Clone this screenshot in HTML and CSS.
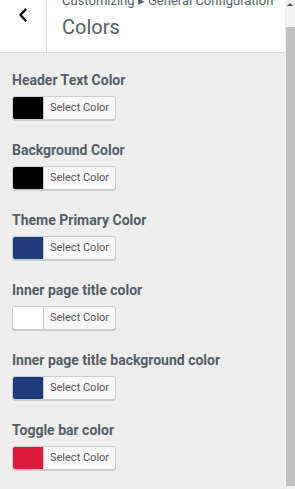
FILE: index.html
```html
<!DOCTYPE html>
<html lang="en">
<head>
<meta charset="utf-8">
<title>Colors</title>
<link rel="stylesheet" href="styles.css">
</head>
<body>
<div class="frame">
  <div class="panel">
    <header class="head">
      <div class="back">
        <svg width="10" height="14" viewBox="0 0 10 14"><path d="M7.5 1.5 L2.5 7 L7.5 12.5" fill="none" stroke="#000" stroke-width="2.2" stroke-linecap="square"/></svg>
      </div>
      <div class="titles">
        <div class="crumb">Customizing ▸ General Configuration</div>
        <div class="title">Colors</div>
      </div>
    </header>
    <div class="list">
      <div class="item">
        <div class="label">Header Text Color</div>
        <div class="picker"><span class="swatch black"></span><span class="btn-text">Select Color</span></div>
      </div>
      <div class="item">
        <div class="label">Background Color</div>
        <div class="picker"><span class="swatch black"></span><span class="btn-text">Select Color</span></div>
      </div>
      <div class="item">
        <div class="label">Theme Primary Color</div>
        <div class="picker"><span class="swatch blue"></span><span class="btn-text">Select Color</span></div>
      </div>
      <div class="item">
        <div class="label">Inner page title color</div>
        <div class="picker"><span class="swatch white"></span><span class="btn-text">Select Color</span></div>
      </div>
      <div class="item">
        <div class="label">Inner page title background color</div>
        <div class="picker"><span class="swatch blue"></span><span class="btn-text">Select Color</span></div>
      </div>
      <div class="item">
        <div class="label">Toggle bar color</div>
        <div class="picker"><span class="swatch red"></span><span class="btn-text">Select Color</span></div>
      </div>
    </div>
  </div>
  <div class="scrollbar">
    <div class="arrow"></div>
    <div class="thumb"></div>
  </div>
</div>
</body>
</html>
```
FILE: styles.css
```css
html, body {
  margin: 0;
  padding: 0;
}
body {
  font-family: Roboto, "Liberation Sans", sans-serif;
  background: #eeeeee;
  color: #555d66;
}
.frame {
  display: flex;
  width: 295px;
  height: 489px;
  overflow: hidden;
}
.panel {
  flex: 0 0 285px;
  background: #eeeeee;
  overflow: hidden;
}
.head {
  display: flex;
  height: 52px;
  background: #ffffff;
  border-bottom: 1px solid #dddddd;
}
.back {
  flex: 0 0 47px;
  border-right: 1px solid #dddddd;
  display: flex;
  justify-content: center;
  align-items: flex-start;
  padding-top: 8px;
  box-sizing: border-box;
}
.titles {
  padding-left: 15px;
  margin-top: -8px;
  white-space: nowrap;
}
.crumb {
  font-size: 13px;
  line-height: 18px;
  color: #555d66;
}
.title {
  margin-top: 4px;
  font-size: 20px;
  line-height: 26px;
  color: #555d66;
}
.list {
  display: flex;
  flex-direction: column;
  gap: 20px;
  padding: 17px 12px 0;
}
.item {
  display: flex;
  flex-direction: column;
  gap: 6px;
}
.label {
  font-size: 14px;
  line-height: 20px;
  font-weight: 700;
  color: #555d66;
}
.picker {
  display: flex;
  align-items: stretch;
  width: 104px;
  height: 24px;
  box-sizing: border-box;
  border: 1px solid #cccccc;
  border-radius: 3px;
  background: #f7f7f7;
  box-shadow: 0 1px 0 #cccccc;
  overflow: hidden;
}
.swatch {
  flex: 0 0 30px;
  border-right: 1px solid #cccccc;
}
.swatch.black { background: #000000; }
.swatch.blue { background: #1e3b7c; }
.swatch.white { background: #ffffff; }
.swatch.red { background: #dc1a3e; }
.btn-text {
  padding-left: 6px;
  font-size: 11px;
  line-height: 22px;
  color: #555555;
}
.scrollbar {
  flex: 0 0 10px;
  background: #f1f1f1;
  display: flex;
  flex-direction: column;
  align-items: flex-end;
}
.arrow {
  align-self: center;
  margin-top: 3px;
  width: 0;
  height: 0;
  border-left: 3px solid transparent;
  border-right: 3px solid transparent;
  border-bottom: 3px solid #505050;
}
.thumb {
  margin-top: 21px;
  width: 9px;
  height: 459px;
  background: #c1c1c1;
}
```
